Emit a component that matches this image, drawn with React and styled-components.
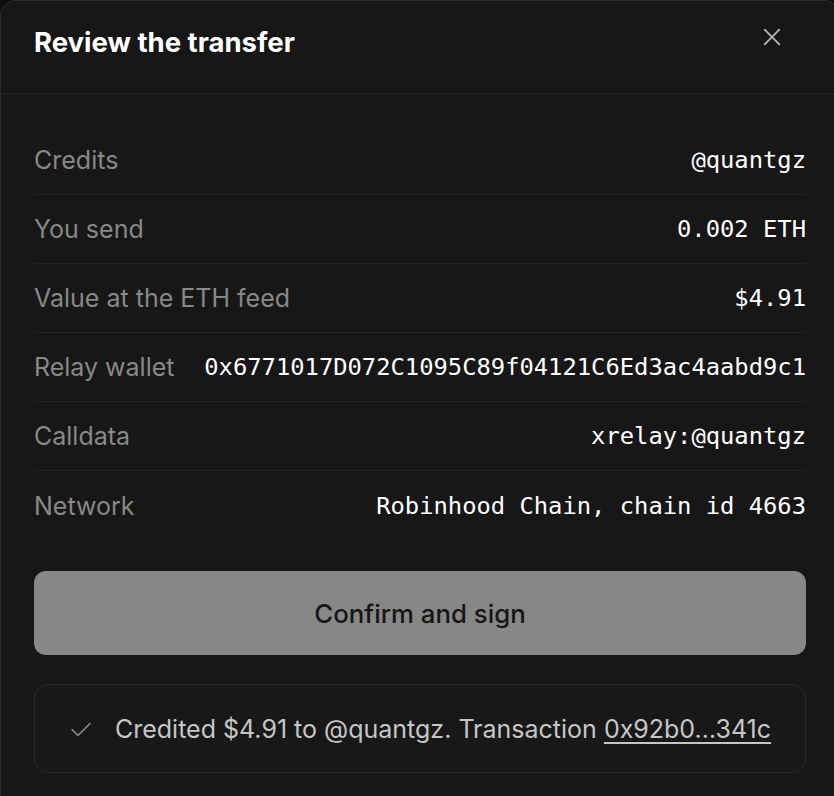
import React from "react";
import styled, { createGlobalStyle } from "styled-components";

const GlobalStyle = createGlobalStyle`
  html, body {
    margin: 0;
    padding: 0;
    background: #0f0f0f;
    overflow: hidden;
  }
  body {
    font-family: Inter, "Liberation Sans", sans-serif;
  }
`;

const rows = [
  { label: "Credits", value: "@quantgz" },
  { label: "You send", value: "0.002 ETH" },
  { label: "Value at the ETH feed", value: "$4.91" },
  { label: "Relay wallet", value: "0x6771017D072C1095C89f04121C6Ed3ac4aabd9c1" },
  { label: "Calldata", value: "xrelay:@quantgz" },
  { label: "Network", value: "Robinhood Chain, chain id 4663" },
];

export default function App() {
  return (
    <>
      <GlobalStyle />
      <Dialog>
        <Header>
          <Title>Review the transfer</Title>
          <CloseButton aria-label="Close">
            <svg width="22" height="22" viewBox="0 0 24 24" fill="none">
              <path d="M4 4L20 20M20 4L4 20" stroke="#b5b5b5" strokeWidth="2" strokeLinecap="round" />
            </svg>
          </CloseButton>
        </Header>

        <Body>
          <Details>
            {rows.map((row) => (
              <Row key={row.label}>
                <Label>{row.label}</Label>
                <Value>{row.value}</Value>
              </Row>
            ))}
          </Details>

          <ConfirmButton disabled>Confirm and sign</ConfirmButton>

          <Status>
            <svg width="24" height="24" viewBox="0 0 24 24" fill="none">
              <path d="M3 12.5L9 18.5L21 6.5" stroke="#8c8c8c" strokeWidth="1.6" strokeLinecap="round" strokeLinejoin="round" />
            </svg>
            <StatusText>
              Credited $4.91 to @quantgz. Transaction <TxLink href="#">0x92b0…341c</TxLink>
            </StatusText>
          </Status>
        </Body>
      </Dialog>
    </>
  );
}

const Dialog = styled.div`
  width: 840px;
  height: 100vh;
  box-sizing: border-box;
  background: #171717;
  border: 1px solid #2a2a2a;
  border-bottom: none;
  border-radius: 16px 16px 0 0;
`;

const Header = styled.div`
  height: 93px;
  box-sizing: border-box;
  display: flex;
  justify-content: space-between;
  align-items: flex-start;
  padding: 25px 33px 0 33px;
  border-bottom: 1px solid #262626;
`;

const Title = styled.h2`
  margin: 0;
  font-size: 27.5px;
  line-height: 32px;
  font-weight: 700;
  color: #ffffff;
`;

const CloseButton = styled.button`
  background: none;
  border: none;
  padding: 0;
  margin: 0 23px 0 0;
  width: 22px;
  height: 22px;
  cursor: pointer;
`;

const Body = styled.div`
  padding: 32px 33px 0 33px;
  display: flex;
  flex-direction: column;
`;

const Details = styled.div`
  display: flex;
  flex-direction: column;
`;

const Row = styled.div`
  height: 69px;
  box-sizing: border-box;
  display: flex;
  justify-content: space-between;
  align-items: center;
  gap: 24px;
  border-bottom: 1px solid #242424;

  &:last-child {
    border-bottom: none;
  }
`;

const Label = styled.span`
  font-size: 25px;
  color: #888888;
  white-space: nowrap;
`;

const Value = styled.span`
  font-family: "DejaVu Sans Mono", "Liberation Mono", monospace;
  font-size: 23.8px;
  color: #ffffff;
  white-space: nowrap;
`;

const ConfirmButton = styled.button`
  margin-top: 31px;
  height: 84px;
  border: none;
  border-radius: 12px;
  background: #878787;
  color: #161616;
  font-family: Inter, "Liberation Sans", sans-serif;
  font-size: 25.8px;
  font-weight: 500;
  cursor: not-allowed;
`;

const Status = styled.div`
  margin-top: 29px;
  height: 89px;
  box-sizing: border-box;
  display: flex;
  align-items: center;
  gap: 22px;
  padding: 0 34px;
  border: 1px solid #2a2a2a;
  border-radius: 14px;
  background: #181818;
`;

const StatusText = styled.span`
  font-size: 25px;
  color: #c6c6c6;
  white-space: nowrap;
`;

const TxLink = styled.a`
  color: #c6c6c6;
  text-decoration: underline;
  text-underline-offset: 4px;
  text-decoration-thickness: 1.5px;
`;
